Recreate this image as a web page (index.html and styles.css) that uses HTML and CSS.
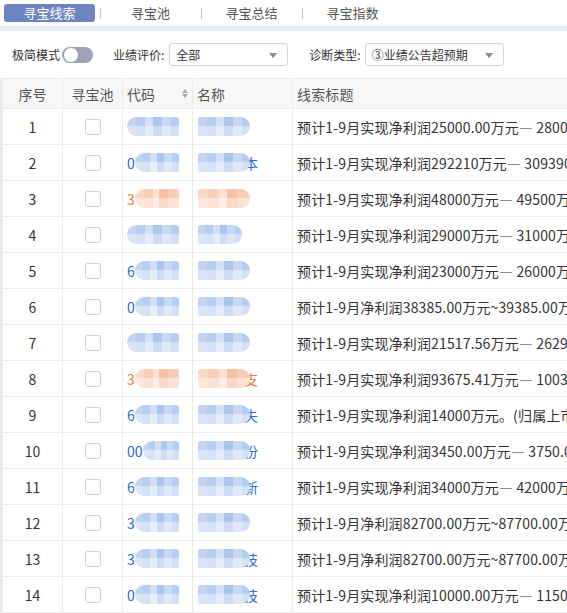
FILE: index.html
```html
<!DOCTYPE html>
<html lang="zh-CN">
<head>
<meta charset="utf-8">
<link rel="stylesheet" href="styles.css">
</head>
<body>
<div class="tabs">
  <div class="tab active">寻宝线索</div>
  <div class="sep"></div>
  <div class="tab">寻宝池</div>
  <div class="sep"></div>
  <div class="tab">寻宝总结</div>
  <div class="sep"></div>
  <div class="tab">寻宝指数</div>
</div>
<div class="band"></div>
<div class="filters">
  <span class="label">极简模式</span>
  <span class="toggle"><span class="knob"></span></span>
  <span class="label l2">业绩评价:</span>
  <span class="select s1">全部<i class="arrow"></i></span>
  <span class="label l3">诊断类型:</span>
  <span class="select s2">③业绩公告超预期<i class="arrow"></i></span>
</div>
<div class="tablewrap">
  <div class="grid">
    <div class="row head">
      <div class="c c1">序号</div>
      <div class="c c2">寻宝池</div>
      <div class="c c3 left">代码<span class="sort"><i class="up"></i><i class="down"></i></span></div>
      <div class="c c4 left">名称</div>
      <div class="c c5 left">线索标题</div>
    </div>
    <div class="row"><div class="c c1">1</div><div class="c c2"><span class="cb"></span></div><div class="c c3 code"><span class="ch"></span><span class="pill blue"></span></div><div class="c c4 code"><span class="pill npill blue"></span><span class="ch"></span></div><div class="c c5 left">预计1-9月实现净利润25000.00万元— 28000.00万元</div></div>
    <div class="row"><div class="c c1">2</div><div class="c c2"><span class="cb"></span></div><div class="c c3 code"><span class="ch">0</span><span class="pill blue"></span></div><div class="c c4 code"><span class="pill npill blue"></span><span class="ch">本</span></div><div class="c c5 left">预计1-9月实现净利润292210万元— 309390万元</div></div>
    <div class="row"><div class="c c1">3</div><div class="c c2"><span class="cb"></span></div><div class="c c3 code orange"><span class="ch">3</span><span class="pill org"></span></div><div class="c c4 code orange"><span class="pill npill org"></span><span class="ch"></span></div><div class="c c5 left">预计1-9月实现净利润48000万元— 49500万元</div></div>
    <div class="row"><div class="c c1">4</div><div class="c c2"><span class="cb"></span></div><div class="c c3 code"><span class="ch"></span><span class="pill blue"></span></div><div class="c c4 code"><span class="pill npill blue short"></span><span class="ch"></span></div><div class="c c5 left">预计1-9月实现净利润29000万元— 31000万元</div></div>
    <div class="row"><div class="c c1">5</div><div class="c c2"><span class="cb"></span></div><div class="c c3 code"><span class="ch">6</span><span class="pill blue"></span></div><div class="c c4 code"><span class="pill npill blue"></span><span class="ch"></span></div><div class="c c5 left">预计1-9月实现净利润23000万元— 26000万元</div></div>
    <div class="row"><div class="c c1">6</div><div class="c c2"><span class="cb"></span></div><div class="c c3 code"><span class="ch">0</span><span class="pill blue"></span></div><div class="c c4 code"><span class="pill npill blue"></span><span class="ch"></span></div><div class="c c5 left">预计1-9月净利润38385.00万元~39385.00万元</div></div>
    <div class="row"><div class="c c1">7</div><div class="c c2"><span class="cb"></span></div><div class="c c3 code"><span class="ch"></span><span class="pill blue"></span></div><div class="c c4 code"><span class="pill npill blue"></span><span class="ch"></span></div><div class="c c5 left">预计1-9月实现净利润21517.56万元— 26290.00万元</div></div>
    <div class="row"><div class="c c1">8</div><div class="c c2"><span class="cb"></span></div><div class="c c3 code orange"><span class="ch">3</span><span class="pill org"></span></div><div class="c c4 code orange"><span class="pill npill org"></span><span class="ch">支</span></div><div class="c c5 left">预计1-9月实现净利润93675.41万元— 100300.00万元</div></div>
    <div class="row"><div class="c c1">9</div><div class="c c2"><span class="cb"></span></div><div class="c c3 code"><span class="ch">6</span><span class="pill blue"></span></div><div class="c c4 code"><span class="pill npill blue"></span><span class="ch">失</span></div><div class="c c5 left">预计1-9月实现净利润14000万元。(归属上市公司股东的净利润)</div></div>
    <div class="row"><div class="c c1">10</div><div class="c c2"><span class="cb"></span></div><div class="c c3 code"><span class="ch">00</span><span class="pill blue"></span></div><div class="c c4 code"><span class="pill npill blue"></span><span class="ch">份</span></div><div class="c c5 left">预计1-9月实现净利润3450.00万元— 3750.00万元</div></div>
    <div class="row"><div class="c c1">11</div><div class="c c2"><span class="cb"></span></div><div class="c c3 code"><span class="ch">6</span><span class="pill blue"></span></div><div class="c c4 code"><span class="pill npill blue"></span><span class="ch">新</span></div><div class="c c5 left">预计1-9月实现净利润34000万元— 42000万元</div></div>
    <div class="row"><div class="c c1">12</div><div class="c c2"><span class="cb"></span></div><div class="c c3 code"><span class="ch">3</span><span class="pill blue"></span></div><div class="c c4 code"><span class="pill npill blue"></span><span class="ch"></span></div><div class="c c5 left">预计1-9月净利润82700.00万元~87700.00万元</div></div>
    <div class="row"><div class="c c1">13</div><div class="c c2"><span class="cb"></span></div><div class="c c3 code"><span class="ch">3</span><span class="pill blue"></span></div><div class="c c4 code"><span class="pill npill blue"></span><span class="ch">技</span></div><div class="c c5 left">预计1-9月净利润82700.00万元~87700.00万元</div></div>
    <div class="row"><div class="c c1">14</div><div class="c c2"><span class="cb"></span></div><div class="c c3 code"><span class="ch">0</span><span class="pill blue"></span></div><div class="c c4 code"><span class="pill npill blue"></span><span class="ch">技</span></div><div class="c c5 left">预计1-9月实现净利润10000.00万元— 11500.00万元</div></div>
  </div>
</div>
</body>
</html>
```

FILE: styles.css
```css
* { box-sizing: border-box; }
html, body { margin: 0; padding: 0; }
body {
  width: 567px;
  height: 613px;
  overflow: hidden;
  background: #fff;
  font-family: "Noto Sans CJK SC", "Microsoft YaHei", sans-serif;
  color: #333;
}
.tabs {
  height: 26px;
  display: flex;
  align-items: flex-start;
  padding: 4px 0 0 4px;
  background: #fff;
}
.tab {
  width: 91px;
  height: 18px;
  line-height: 18px;
  text-align: center;
  font-size: 13px;
  color: #555;
  border-radius: 3px;
}
.tab.active {
  background: #6d85c0;
  color: #fff;
}
.sep {
  width: 10px;
  height: 18px;
  display: flex;
  justify-content: center;
  align-items: center;
}
.sep::before {
  content: "";
  width: 1px;
  height: 11px;
  background: #c8c8c8;
}
.band {
  height: 5px;
  background: #e7ecf5;
}
.filters {
  height: 47px;
  display: flex;
  align-items: center;
  padding-left: 12px;
  font-size: 12px;
  background: #fff;
}
.label { color: #333; white-space: nowrap; }
.toggle {
  width: 31px;
  height: 16px;
  margin-left: 2px;
  border-radius: 8px;
  background: #9da2b6;
  position: relative;
  display: inline-block;
}
.knob {
  position: absolute;
  left: 1px;
  top: 0;
  width: 16px;
  height: 16px;
  border-radius: 50%;
  background: #fff;
  border: 1px solid #9da2b6;
}
.l2 { margin-left: 20px; }
.l3 { margin-left: 21px; }
.select {
  position: relative;
  height: 23px;
  line-height: 21px;
  border: 1px solid #d4d4d4;
  border-radius: 3px;
  padding-left: 6px;
  color: #333;
  background: #fff;
}
.s1 { width: 119px; margin-left: 5px; }
.s2 { width: 139px; margin-left: 4px; }
.arrow {
  position: absolute;
  right: 10px;
  top: 9px;
  width: 0;
  height: 0;
  border-left: 4px solid transparent;
  border-right: 4px solid transparent;
  border-top: 5px solid #8c8c8c;
}
.tablewrap {
  padding-left: 3px;
  background: #e7ecf5;
  overflow: hidden;
}
.grid {
  width: 800px;
  background: #fff;
  border-top: 1px solid #ebebeb;
}
.row {
  display: flex;
  height: 36px;
  border-bottom: 1px solid #ebebeb;
}
.row.head {
  height: 30px;
  background: #f7f7f7;
}
.c {
  border-right: 1px solid #ebebeb;
  display: flex;
  align-items: center;
  justify-content: center;
  font-size: 14px;
  white-space: nowrap;
  overflow: hidden;
  color: #333;
}
.head .c { color: #555; }
.c.left { justify-content: flex-start; padding-left: 4px; }
.c1 { width: 60px; }
.c2 { width: 60px; }
.c3 { width: 70px; }
.c4 { width: 100px; }
.c5 { flex: 1; border-right: none; letter-spacing: 0.15px; }
.head .c3 { position: relative; }
.sort {
  position: absolute;
  right: 4px;
  top: 10px;
  display: flex;
  flex-direction: column;
  gap: 1px;
}
.sort i {
  display: block;
  width: 0;
  height: 0;
  border-left: 3.5px solid transparent;
  border-right: 3.5px solid transparent;
}
.sort .up { border-bottom: 4px solid #a8a8a8; }
.sort .down { border-top: 4px solid #a8a8a8; }
.cb {
  width: 16px;
  height: 16px;
  border: 1px solid #cfcfcf;
  border-radius: 3px;
  background: #fff;
}
.code {
  justify-content: flex-start;
  padding-left: 4px;
  color: #2d6ad6;
}
.code.orange { color: #f4793a; }
.c3.code { padding-right: 13px; }
.c3 .pill { flex: 1; border-radius: 10px 3px 3px 10px; }
.ch { flex: none; }
.pill {
  display: block;
  height: 19px;
  border-radius: 10px;
  filter: blur(0.5px);
}
.npill {
  width: 52px;
  flex: none;
  margin-left: 1px;
  margin-right: -6px;
  border-radius: 3px 10px 10px 3px;
}
.npill.short { width: 44px; }
.pill.blue {
  background:
    linear-gradient(to bottom, rgba(255,255,255,0) 50%, rgba(255,255,255,0.4) 50%),
    linear-gradient(90deg, #c3d4f2 0 17%, #b8cdf0 17% 34%, #d2dff5 34% 50%, #adc5ee 50% 67%, #c9d9f4 67% 84%, #b6ccf0 84%);
}
.pill.org {
  background:
    linear-gradient(to bottom, rgba(255,255,255,0) 50%, rgba(255,255,255,0.4) 50%),
    linear-gradient(90deg, #fbd9c6 0 20%, #f9cfb8 20% 40%, #fce2d3 40% 55%, #f7c1a3 55% 75%, #f9ceb5 75%);
}
```
